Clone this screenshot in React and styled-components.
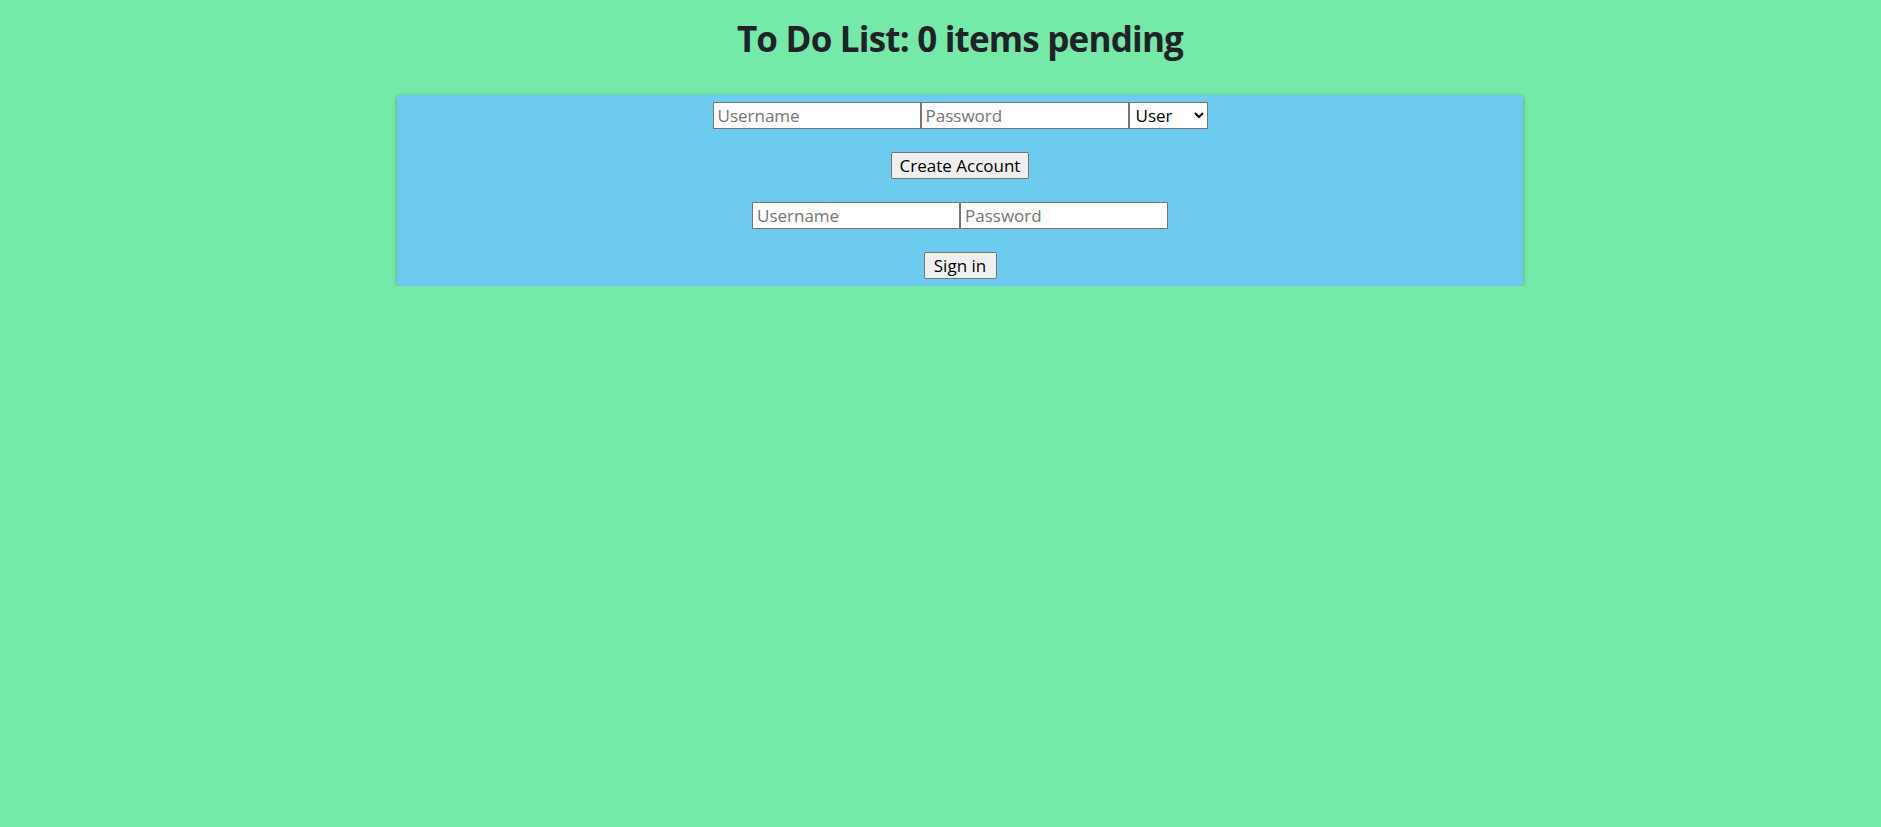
import React, { useState } from "react";
import styled, { createGlobalStyle } from "styled-components";

const GlobalStyle = createGlobalStyle`
  html, body {
    margin: 0;
    padding: 0;
    background: #75e9a7;
    font-family: "Open Sans", "Noto Sans", sans-serif;
    color: #212529;
  }
`;

const Page = styled.div`
  width: 1126px;
  margin-left: 397px;
  display: flex;
  flex-direction: column;
  align-items: stretch;
`;

const Title = styled.h1`
  margin: 0;
  height: 95px;
  padding-top: 15px;
  box-sizing: border-box;
  text-align: center;
  font-size: 35px;
  font-weight: 700;
  letter-spacing: -0.8px;
  line-height: 48px;
  color: #1f2328;
`;

const Panel = styled.div`
  background: #6ecbf0;
  border-radius: 3px;
  box-shadow: 0 1px 4px rgba(0, 0, 0, 0.3);
  padding: 7px 0 7px;
  display: flex;
  flex-direction: column;
  align-items: center;
  gap: 23px;
`;

const Row = styled.div`
  display: flex;
  justify-content: center;
`;

const Field = styled.input`
  width: 208px;
  height: 27px;
  box-sizing: border-box;
  margin: 0;
  padding: 0 4px;
  border: 1px solid #767676;
  border-radius: 0;
  background: #fff;
  font-family: "Open Sans", "Noto Sans", sans-serif;
  font-size: 17px;
  color: #000;
  &::placeholder {
    color: #757575;
  }
`;

const Select = styled.select`
  width: 79px;
  height: 27px;
  box-sizing: border-box;
  margin: 0;
  padding: 0 2px;
  border: 1px solid #767676;
  border-radius: 0;
  background: #fff;
  font-family: "Open Sans", "Noto Sans", sans-serif;
  font-size: 17px;
  color: #000;
`;

const Button = styled.button`
  height: 27px;
  width: ${(p) => p.w}px;
  box-sizing: border-box;
  padding: 0;
  border: 1px solid #767676;
  border-radius: 2px;
  background: #efefef;
  font-family: "Open Sans", "Noto Sans", sans-serif;
  font-size: 17px;
  color: #000;
`;

const App = () => {
  const [items] = useState([]);
  return (
    <>
      <GlobalStyle />
      <Page>
        <Title>To Do List: {items.length} items pending</Title>
        <Panel>
          <Row>
            <Field placeholder="Username" />
            <Field placeholder="Password" type="password" />
            <Select defaultValue="User">
              <option>User</option>
              <option>Admin</option>
            </Select>
          </Row>
          <Button w={138}>Create Account</Button>
          <Row>
            <Field placeholder="Username" />
            <Field placeholder="Password" type="password" />
          </Row>
          <Button w={73}>Sign in</Button>
        </Panel>
      </Page>
    </>
  );
};

export default App;
